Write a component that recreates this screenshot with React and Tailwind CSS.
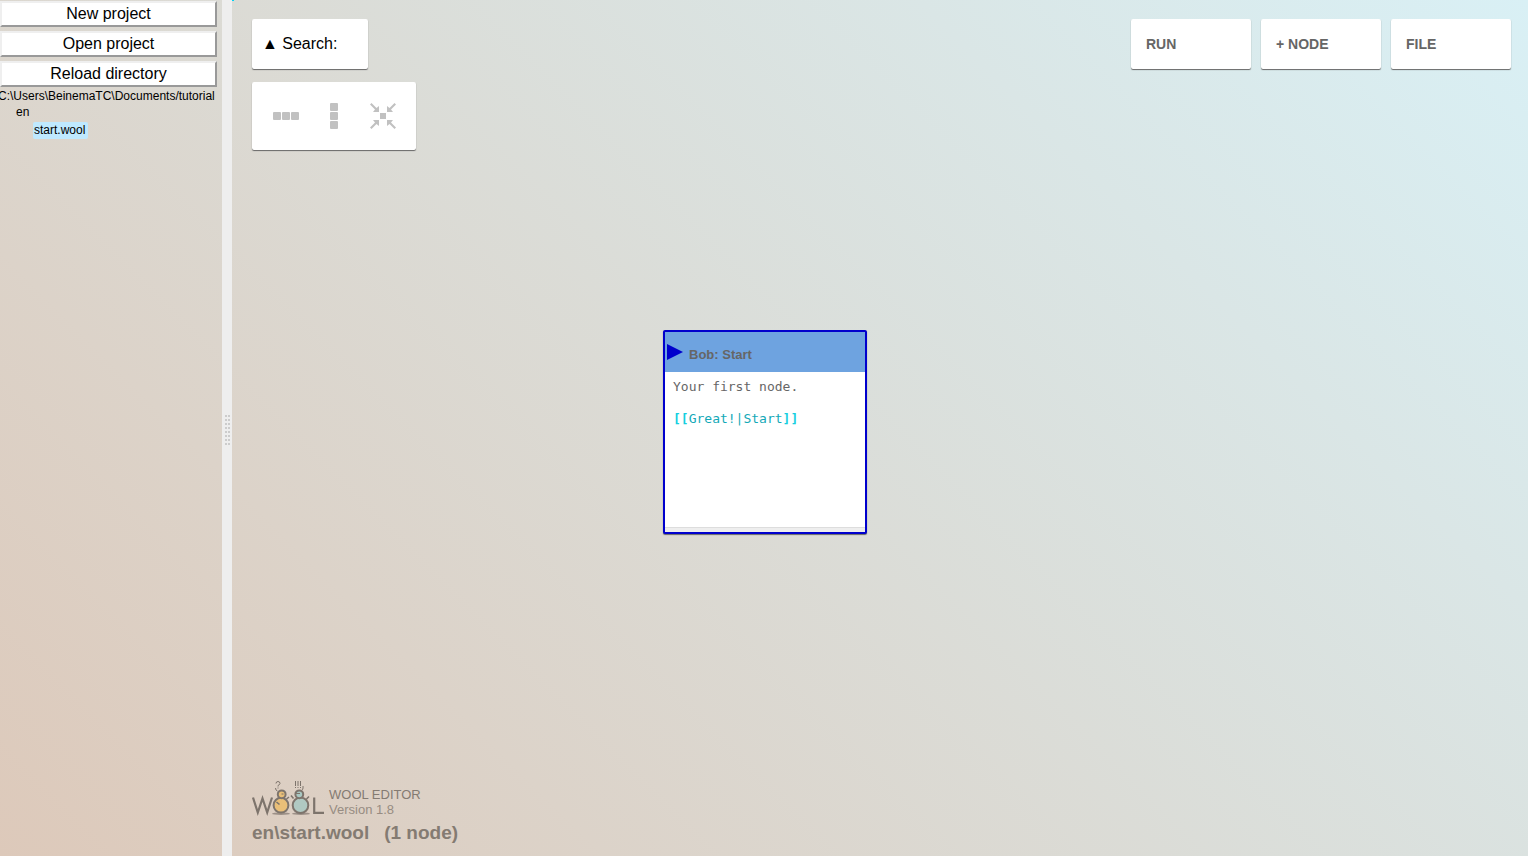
const projectActions = ['New project', 'Open project', 'Reload directory'];
const menuActions = ['RUN', '+ NODE', 'FILE'];

const card = 'rounded-xs bg-white shadow-[0_1px_1px_#666]';

function Sidebar() {
  return (
    <aside className="w-[222px] shrink-0 overflow-hidden pt-px text-black">
      <div className="flex flex-col gap-1 pr-[5px]">
        {projectActions.map((label) => (
          <button
            key={label}
            type="button"
            className="h-[26px] border-2 border-t-[#efefef] border-r-[#999] border-b-[#999] border-l-[#efefef] bg-white text-base leading-[20px]"
          >
            {label}
          </button>
        ))}
      </div>
      <nav className="text-xs leading-[16px]">
        <div className="-ml-0.5 pt-px whitespace-nowrap">C:\Users\BeinemaTC\Documents/tutorial</div>
        <div className="pl-4">en</div>
        <a href="#start" className="mt-0.5 ml-[33px] inline-block rounded-xs bg-[#bfe9ff] pr-[3px] pl-px leading-[17px]">
          start.wool
        </a>
      </nav>
    </aside>
  );
}

function Splitter() {
  return (
    <div className="flex w-2.5 shrink-0 items-center justify-end bg-[#eee] pt-1 pr-0.5" role="separator">
      <svg width="5" height="30" viewBox="0 0 5 30" fill="#ccc" shapeRendering="crispEdges">
        {[0, 4, 8, 12, 16, 20, 24, 28].map((y) => (
          <g key={y}>
            <rect x="0" y={y} width="2" height="2" />
            <rect x="3" y={y} width="2" height="2" />
          </g>
        ))}
      </svg>
    </div>
  );
}

function ArrangeTools() {
  return (
    <div className={`${card} flex h-[68px] w-[164px] items-center gap-5 pl-5`}>
      <button type="button" aria-label="Align horizontally">
        <svg width="28" height="28" viewBox="0 0 28 28" fill="#c1c1c1">
          <rect x="1" y="10" width="8" height="8" rx="1" />
          <rect x="10" y="10" width="8" height="8" rx="1" />
          <rect x="19" y="10" width="8" height="8" rx="1" />
        </svg>
      </button>
      <button type="button" aria-label="Align vertically">
        <svg width="28" height="28" viewBox="0 0 28 28" fill="#c1c1c1">
          <rect x="10" y="1" width="8" height="8" rx="1" />
          <rect x="10" y="10" width="8" height="8" rx="1" />
          <rect x="10" y="19" width="8" height="8" rx="1" />
        </svg>
      </button>
      <button type="button" aria-label="Gather nodes">
        <svg width="30" height="28" viewBox="0 0 30 28" fill="#c1c1c1">
          <rect x="12" y="11" width="6" height="6" />
          {[0, 90, 180, 270].map((angle) => (
            <g key={angle} transform={`rotate(${angle} 15 14)`}>
              <path d="M2 2.500 3.500 1 8.500 6 11 4V10H5L7 7.500Z" />
            </g>
          ))}
        </svg>
      </button>
    </div>
  );
}

function StoryNode() {
  return (
    <article className="absolute top-[330px] left-[431px] flex h-[204px] w-[204px] flex-col rounded-xs border-2 border-[#0000cd] bg-white shadow-[0_1px_1px_#666]">
      <header className="flex h-10 items-center gap-1.5 bg-[#6ea3e0] pl-0.5">
        <svg width="16" height="16" viewBox="0 0 16 16" fill="#0000cd">
          <path d="M0 0 16 8 0 16Z" />
        </svg>
        <h2 className="pt-1.5 text-[13px] font-bold text-[#666]">Bob: Start</h2>
      </header>
      <div className="flex-1 px-2 pt-[7px] font-['DejaVu_Sans_Mono',monospace] text-[13px] leading-[16px] text-[#666]">
        <p>Your first node.</p>
        <p className="pt-4 text-[#13a9b8]">
          <b className="text-[#14cfe0]">[[</b>Great!|Start<b className="text-[#14cfe0]">]]</b>
        </p>
      </div>
      <footer className="h-[5px] border-t border-[#ddd] bg-[#eee]" />
    </article>
  );
}

function Logo() {
  return (
    <svg width="72" height="37" viewBox="0 0 72 37" fill="none" stroke="#7d746c" strokeWidth="2" aria-label="Wool">
      <ellipse cx="29" cy="33.700" rx="9" ry="1.300" fill="#9c9087" stroke="none" />
      <ellipse cx="49" cy="33.700" rx="9" ry="1.300" fill="#9c9087" stroke="none" />
      <path d="M1 17.500 5.800 32.500 10.500 18.500 15.200 32.500 20 17.500M62.200 17.500V32.800H72" strokeWidth="2.200" />
      <circle cx="29" cy="25.200" r="7.400" fill="#e9bf78" />
      <circle cx="29.700" cy="14.300" r="3.900" fill="#e9bf78" />
      <circle cx="48.500" cy="25.200" r="7.800" fill="#b0c9c2" />
      <circle cx="47.300" cy="14.300" r="3.900" fill="#a9c8c2" />
      <path d="M24.500 22 27.500 24.500M34.500 19 37 17M41.500 18.500 39 15.500M54.500 19 57 16.500" strokeWidth="1.600" />
      <path d="M29.500 14H31.500M44 13.500H48" strokeWidth="1" />
      <path d="M24 3.500Q24 1.500 26 1.500T28 3.500Q28 4.500 26 5.500V6.500M26 7.500V8.500M23.500 8Q23.500 10.500 25.500 11" strokeWidth="1" />
      <path d="M43.500 1V6M46 1V6M48.500 1V6M43.500 7V8M46 7V8M48.500 7V8M51 6V8Q51 9.500 50 10" strokeWidth="1" />
    </svg>
  );
}

export default function App() {
  return (
    <div className="flex min-h-screen bg-[linear-gradient(45deg,#ddc9ba,#d9f0f5)] font-['Liberation_Sans',Arial,sans-serif]">
      <Sidebar />
      <Splitter />
      <main className="relative flex flex-1 flex-col justify-between pt-[19px] pr-[17px] pb-2.5 pl-5">
        <span className="absolute top-0 left-0 h-px w-0.5 bg-cyan-400" />
        <div className="flex items-start justify-between">
          <div className="flex flex-col gap-[13px]">
            <button type="button" className={`${card} h-[50px] w-[116px] pl-2.5 text-left text-base text-black`}>
              ▲ Search:
            </button>
            <ArrangeTools />
          </div>
          <div className="flex gap-2.5">
            {menuActions.map((label) => (
              <button
                key={label}
                type="button"
                className={`${card} h-[50px] w-[120px] px-[15px] text-left text-sm font-bold text-[#666]`}
              >
                {label}
              </button>
            ))}
          </div>
        </div>
        <StoryNode />
        <footer className="text-[#847b72]">
          <div className="flex items-end gap-[5px]">
            <Logo />
            <div className="text-[13px] leading-[15px]">
              <div>WOOL EDITOR</div>
              <div className="text-[#978c82]">Version 1.8</div>
            </div>
          </div>
          <div className="flex gap-[15px] pt-[3px] text-[19px] leading-[26px] font-bold">
            <span>en\start.wool</span>
            <span>(1 node)</span>
          </div>
        </footer>
      </main>
    </div>
  );
}
